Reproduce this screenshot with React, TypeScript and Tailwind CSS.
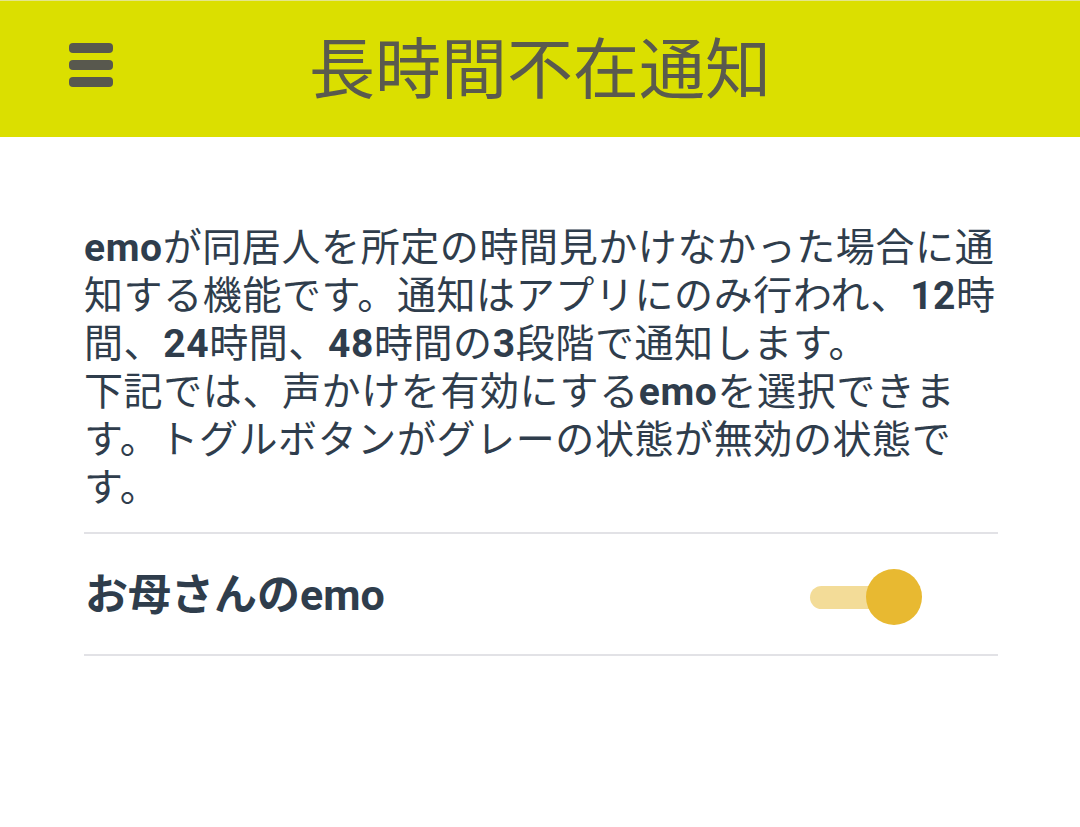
import React, { useState } from 'react';

const font = { fontFamily: 'Roboto, "Noto Sans CJK JP", sans-serif' };

function B({ children }: { children: React.ReactNode }) {
  return <span className="font-bold">{children}</span>;
}

export default function App() {
  const [enabled, setEnabled] = useState(true);

  return (
    <div className="w-[1080px] h-[827px] bg-white overflow-hidden" style={font}>
      <header className="relative h-[137px] bg-[#dbdf00] border-t border-[#e4e68a] flex items-center justify-center">
        <button className="absolute left-[69px] top-[42px] flex flex-col gap-[7px]">
          <span className="block w-[44px] h-[10px] rounded-[4px] bg-[#58584e]" />
          <span className="block w-[44px] h-[10px] rounded-[4px] bg-[#58584e]" />
          <span className="block w-[44px] h-[10px] rounded-[4px] bg-[#58584e]" />
        </button>
        <h1 className="text-[66px] leading-none text-[#5a5a4e] mt-[4px]">長時間不在通知</h1>
      </header>

      <main className="px-[84px] pt-[87px]">
        <p className="text-[39px] leading-[48px] text-[#2f3d4c] whitespace-nowrap tracking-[0.6px]">
          <B>emo</B>が同居人を所定の時間見かけなかった場合に通
          <br />
          知する機能です。通知はアプリにのみ行われ、<B>12</B>時
          <br />
          間、<B>24</B>時間、<B>48</B>時間の<B>3</B>段階で通知します。
          <br />
          下記では、声かけを有効にする<B>emo</B>を選択できま
          <br />
          す。トグルボタンがグレーの状態が無効の状態で
          <br />
          す。
        </p>

        <div className="mt-[20px] w-[914px] border-t-2 border-b-2 border-[#e2e2e6] h-[124px] flex items-center justify-between">
          <span className="text-[43px] leading-none font-bold text-[#2f3d4c] pl-[1px] mt-[2px]">お母さんの<span>emo</span></span>
          <button
            onClick={() => setEnabled(!enabled)}
            className="relative w-[112px] h-[56px] mr-[76px] mt-[6px] flex items-center"
          >
            <span
              className={
                enabled
                  ? 'absolute left-0 w-[80px] h-[23px] rounded-full bg-[#f3dc98]'
                  : 'absolute left-0 w-[80px] h-[23px] rounded-full bg-[#cfcfcf]'
              }
            />
            <span
              className={
                enabled
                  ? 'absolute left-[56px] w-[56px] h-[56px] rounded-full bg-[#e8b931]'
                  : 'absolute left-0 w-[56px] h-[56px] rounded-full bg-[#f1f1f1] shadow'
              }
            />
          </button>
        </div>
      </main>
    </div>
  );
}
